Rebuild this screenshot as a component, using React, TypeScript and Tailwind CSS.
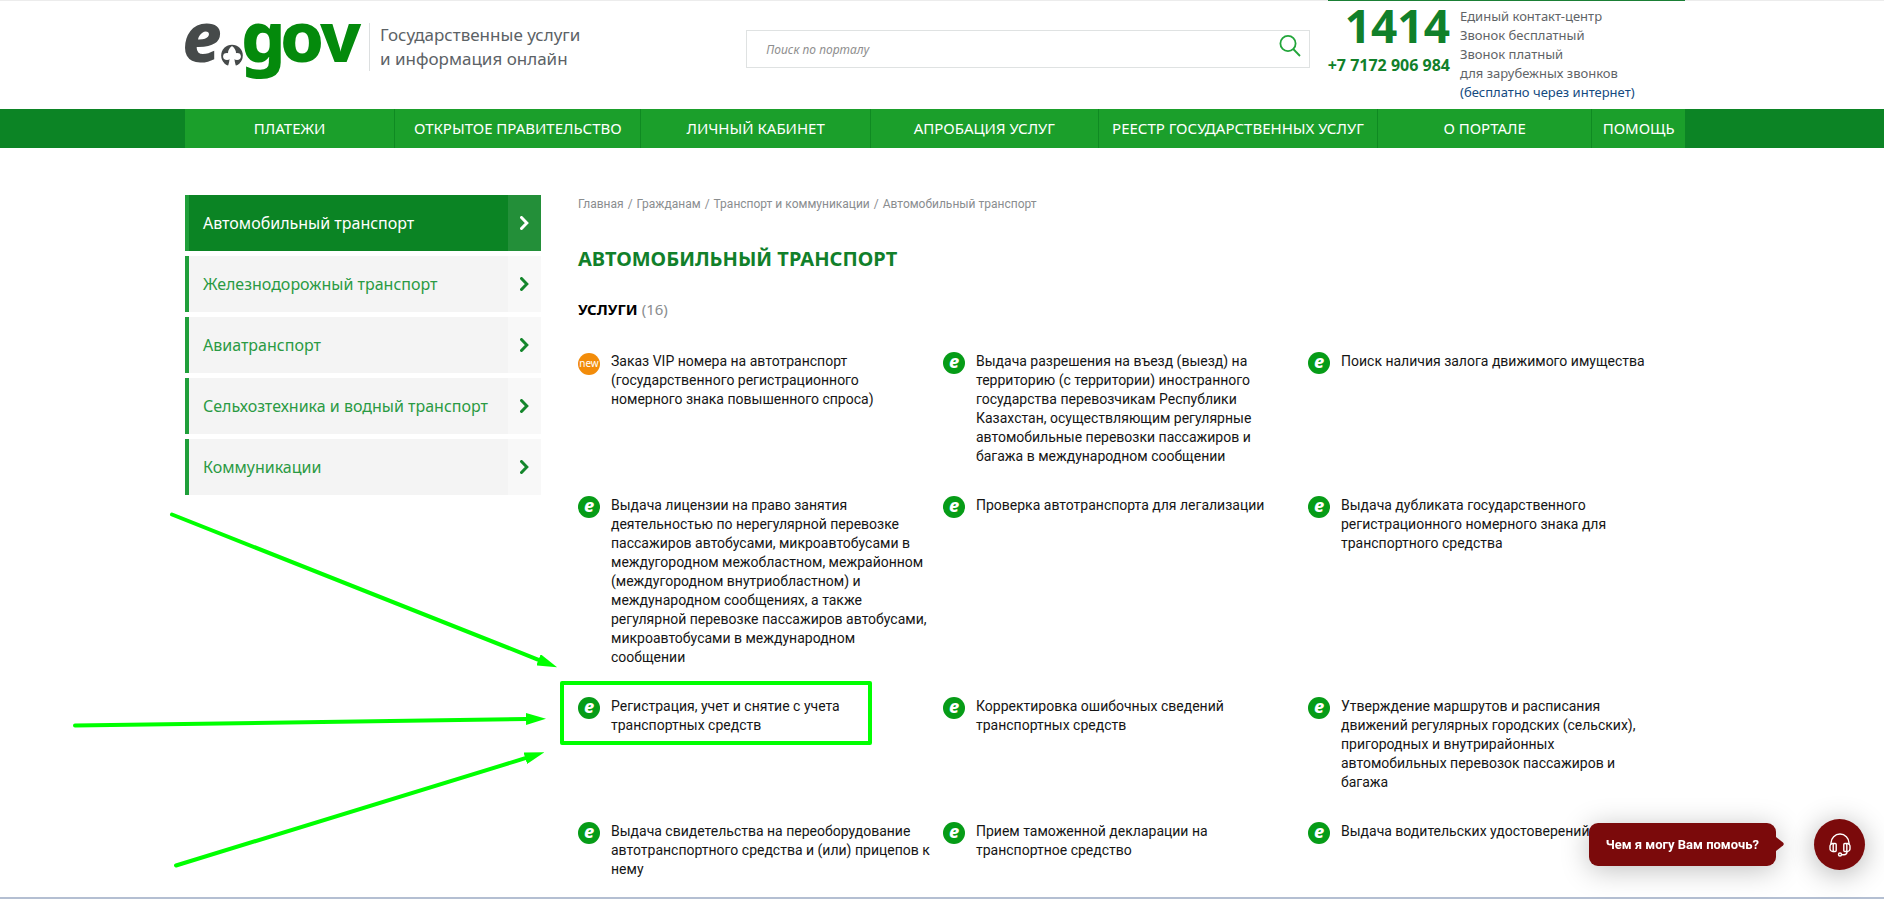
import React from "react";

const navItems = [
  { label: "ПЛАТЕЖИ", grow: "grow-[210]" },
  { label: "ОТКРЫТОЕ ПРАВИТЕЛЬСТВО", grow: "grow-[246]" },
  { label: "ЛИЧНЫЙ КАБИНЕТ", grow: "grow-[229]" },
  { label: "АПРОБАЦИЯ УСЛУГ", grow: "grow-[228]" },
  { label: "РЕЕСТР ГОСУДАРСТВЕННЫХ УСЛУГ", grow: "grow-[279]" },
  { label: "О ПОРТАЛЕ", grow: "grow-[214]" },
  { label: "ПОМОЩЬ", grow: "grow-[93]" },
];

const sections = [
  "Автомобильный транспорт",
  "Железнодорожный транспорт",
  "Авиатранспорт",
  "Сельхозтехника и водный транспорт",
  "Коммуникации",
];

const crumbs = ["Главная", "Гражданам", "Транспорт и коммуникации", "Автомобильный транспорт"];

type Service = { text: string; isNew?: boolean; marked?: boolean };

const services: Service[] = [
  {
    text: "Заказ VIP номера на автотранспорт\n(государственного регистрационного\nномерного знака повышенного спроса)",
    isNew: true,
  },
  {
    text: "Выдача разрешения на въезд (выезд) на\nтерриторию (с территории) иностранного\nгосударства перевозчикам Республики\nКазахстан, осуществляющим регулярные\nавтомобильные перевозки пассажиров и\nбагажа в международном сообщении",
  },
  { text: "Поиск наличия залога движимого имущества" },
  {
    text: "Выдача лицензии на право занятия\nдеятельностью по нерегулярной перевозке\nпассажиров автобусами, микроавтобусами в\nмеждугородном межобластном, межрайонном\n(междугородном внутриобластном) и\nмеждународном сообщениях, а также\nрегулярной перевозке пассажиров автобусами,\nмикроавтобусами в международном\nсообщении",
  },
  { text: "Проверка автотранспорта для легализации" },
  {
    text: "Выдача дубликата государственного\nрегистрационного номерного знака для\nтранспортного средства",
  },
  { text: "Регистрация, учет и снятие с учета\nтранспортных средств", marked: true },
  { text: "Корректировка ошибочных сведений\nтранспортных средств" },
  {
    text: "Утверждение маршрутов и расписания\nдвижений регулярных городских (сельских),\nпригородных и внутрирайонных\nавтомобильных перевозок пассажиров и\nбагажа",
  },
  {
    text: "Выдача свидетельства на переоборудование\nавтотранспортного средства и (или) прицепов к\nнему",
  },
  { text: "Прием таможенной декларации на\nтранспортное средство" },
  { text: "Выдача водительских удостоверений" },
];

function Logo() {
  return (
    <svg width="176" height="64" viewBox="0 0 176 64" className="block shrink-0 overflow-visible" role="img" aria-label="e.gov">
      <g fontFamily="'Noto Sans', sans-serif" fontWeight="800" fontSize="70">
        <text x="-3" y="45" fontStyle="italic" fill="#464a4a">e</text>
        <g fill="#048a0c">
          <text x="56" y="45">g</text>
          <text x="95" y="45">o</text>
          <text x="135" y="45">v</text>
        </g>
      </g>
      <circle cx="47" cy="38.500" r="10.800" fill="#464a4a" />
      <g fill="#fff">
        <path d="M47 29 C49.500 31 51 33 51 36 L51 40 L43 40 L43 36 C43 33 44.500 31 47 29 Z" />
        <ellipse cx="42" cy="39.500" rx="3.900" ry="3.400" />
        <ellipse cx="52" cy="39.500" rx="3.900" ry="3.400" />
        <path d="M44.500 39 H49.500 C49.200 43 50 46.500 51.500 50.500 H42.500 C44 46.500 44.800 43 44.500 39 Z" />
      </g>
    </svg>
  );
}

function Chevron() {
  return (
    <svg width="9" height="14" viewBox="0 0 9 14" fill="none" stroke="currentColor" strokeWidth="3" aria-hidden="true">
      <path d="M1.500 1.500 L6.800 7 L1.500 12.500" strokeLinecap="round" strokeLinejoin="miter" />
    </svg>
  );
}

function ServiceIcon({ isNew }: { isNew?: boolean }) {
  return isNew ? (
    <svg width="22" height="22" viewBox="0 0 22 22" className="mt-px shrink-0" aria-hidden="true">
      <circle cx="11" cy="11" r="11" fill="#f28c0a" />
      <text x="11" y="14" textAnchor="middle" fontFamily="'Noto Sans', sans-serif" fontSize="10" fill="#fff">new</text>
    </svg>
  ) : (
    <svg width="22" height="22" viewBox="0 0 22 22" className="shrink-0" aria-hidden="true">
      <circle cx="11" cy="11" r="11" fill="#069c17" />
      <text x="11" y="16" textAnchor="middle" fontFamily="'Noto Sans', sans-serif" fontWeight="800" fontStyle="italic" fontSize="18" fill="#fff">e</text>
    </svg>
  );
}

function Arrows() {
  return (
    <svg
      width="500"
      height="360"
      viewBox="73 510 500 360"
      className="pointer-events-none absolute top-[362px] -left-28"
      stroke="#00ff00"
      strokeWidth="4"
      strokeLinecap="round"
      aria-hidden="true"
    >
      <defs>
        <marker id="head" markerUnits="userSpaceOnUse" markerWidth="20" markerHeight="12" refX="0" refY="6" orient="auto">
          <path d="M0 0 L20 6 L0 12 Z" fill="#00ff00" stroke="none" />
        </marker>
      </defs>
      <path d="M172 514.500 L538.500 659.800" markerEnd="url(#head)" />
      <path d="M75 725.500 L526 719" markerEnd="url(#head)" />
      <path d="M176 865.500 L525.300 758.200" markerEnd="url(#head)" />
    </svg>
  );
}

function Header() {
  return (
    <header>
      <div className="border-t border-[#ececec] px-4">
        <div className="mx-auto flex h-[108px] max-w-[1500px] items-start">
          <a href="#home" className="flex pt-[16px]">
            <Logo />
            <span className="ml-2 mt-1.5 flex h-12 items-center border-l border-[#dcdfe0] pl-2.5 text-[17px] leading-6 text-[#5c6266]">
              <span className="whitespace-nowrap">
                Государственные услуги
                <br />
                и информация онлайн
              </span>
            </span>
          </a>
          <form className="mt-[29px] mr-[18px] ml-[166px] flex h-[38px] min-w-0 grow items-start border border-[#dfe2e2]" onSubmit={(e) => e.preventDefault()}>
            <label htmlFor="search" className="sr-only">Поиск по порталу</label>
            <input
              id="search"
              type="search"
              placeholder="Поиск по порталу"
              className="h-9 min-w-0 grow bg-transparent pl-[19px] text-[12px] italic outline-none placeholder:text-[#8e8e8e]"
            />
            <button type="submit" aria-label="Найти" className="mt-1 mr-2 text-[#22a53a]">
              <svg width="22" height="22" viewBox="0 0 22 22" fill="none" stroke="currentColor" strokeWidth="1.800">
                <circle cx="9" cy="8.500" r="7.600" />
                <path d="M14.200 14 L21 21" />
              </svg>
            </button>
          </form>
          <div className="-mt-px flex w-[357px] shrink-0 border-t border-[#1a7f35]">
            <div className="flex w-[122px] flex-col items-end font-bold whitespace-nowrap text-[#11802a]">
              <div className="text-[46px] leading-[48px]">1414</div>
              <div className="mt-1 text-[16px] leading-6">+7 7172 906 984</div>
            </div>
            <div className="ml-2.5 pt-[6px] text-[13px] leading-[19px] whitespace-nowrap text-[#5f6467]">
              <p>Единый контакт-центр</p>
              <p>Звонок бесплатный</p>
              <p>Звонок платный</p>
              <p>для зарубежных звонков</p>
              <a href="#call" className="text-[#134a80]">(бесплатно через интернет)</a>
            </div>
          </div>
        </div>
      </div>
      <nav className="bg-[#0c8425] px-4">
        <ul className="mx-auto flex h-[39px] max-w-[1500px] bg-[#1b9f2b]">
          {navItems.map((item) => (
            <li key={item.label} className={`flex basis-0 border-r border-[#0f8a22] last:border-r-0 ${item.grow}`}>
              <a href="#nav" className="flex grow items-center justify-center text-[15px] whitespace-nowrap text-white">
                {item.label}
              </a>
            </li>
          ))}
        </ul>
      </nav>
    </header>
  );
}

function Sidebar() {
  return (
    <aside className="w-[356px] shrink-0">
      <ul className="flex flex-col gap-[5px]">
        {sections.map((name, i) => (
          <li key={name}>
            <a
              href="#section"
              className={`flex h-14 border-l-4 border-[#1f9f3a] text-[16px] ${i === 0 ? "bg-[#0b8424] text-white" : "bg-[#f4f4f4] text-[#2a9a43]"}`}
            >
              <span className="flex grow items-center pl-3.5 whitespace-nowrap">{name}</span>
              <span className={`flex w-[33px] items-center justify-center ${i === 0 ? "bg-[#238f39]" : "bg-[#f8f8f8] text-[#14862c]"}`}>
                <Chevron />
              </span>
            </a>
          </li>
        ))}
      </ul>
    </aside>
  );
}

function ChatWidget() {
  return (
    <div className="fixed right-[19px] bottom-[29px] flex items-center gap-[38px] font-[Roboto,sans-serif]">
      <div className="relative rounded-[9px] bg-[#7b0a0b] px-[17px] py-[11px] text-[13px] leading-[21px] font-bold whitespace-nowrap text-white shadow-[0_4px_28px_rgba(0,0,0,0.25)]">
        Чем я могу Вам помочь?
        <svg width="8" height="14" viewBox="0 0 8 14" className="absolute top-3.5 left-full" fill="#7b0a0b" aria-hidden="true">
          <path d="M0 0 L7 5.500 Q8.500 7 7 8.500 L0 14 Z" />
        </svg>
      </div>
      <button type="button" aria-label="Открыть чат" className="flex size-[51px] items-center justify-center rounded-full bg-[#7b0a0b] text-white shadow-[0_4px_28px_rgba(0,0,0,0.3)]">
        <svg width="22" height="24" viewBox="0 0 22 24" fill="none" stroke="currentColor" strokeWidth="1.400">
          <path d="M2 11.500 V10 A9 9 0 0 1 20 10 V11.500" />
          <path d="M4.800 10.500 H3.800 A2.800 2.800 0 0 0 1 13.500 V15.500 A2.800 2.800 0 0 0 3.800 18.500 H4.800" />
          <path d="M17.200 10.500 H18.200 A2.800 2.800 0 0 1 21 13.500 V15.500 A2.800 2.800 0 0 1 18.200 18.500 H17.200" />
          <rect x="4.200" y="10.500" width="3" height="8" rx="1" />
          <rect x="14.800" y="10.500" width="3" height="8" rx="1" />
          <path d="M18 18.500 V19 A3 3 0 0 1 15 21.800 H12.500" />
          <circle cx="11" cy="21.500" r="1.500" />
        </svg>
      </button>
    </div>
  );
}

export default function App() {
  return (
    <div className="flex min-h-screen flex-col border-b-2 border-[#b4bfd2] bg-white pr-[14px] font-['Noto_Sans',sans-serif] [&>header]:-mr-[14px] [&>header>*]:pr-[30px]">
      <Header />
      <div className="px-4">
        <div className="relative mx-auto flex max-w-[1500px] gap-[37px] pt-[47px]">
          <Sidebar />
          <main className="min-w-0 grow">
            <ol className="flex gap-1 font-[Roboto,sans-serif] text-[12px] leading-[18px] text-[#8a8d8f]">
              {crumbs.map((crumb, i) => (
                <li key={crumb} className="flex gap-1">
                  {i > 0 && <span>/</span>}
                  <a href="#crumb">{crumb}</a>
                </li>
              ))}
            </ol>
            <h1 className="mt-[30px] text-[20px] leading-8 font-bold text-[#11802a]">АВТОМОБИЛЬНЫЙ ТРАНСПОРТ</h1>
            <h2 className="mt-[22px] text-[15px] leading-6 font-bold text-black">
              УСЛУГИ <span className="font-normal text-[#8a8d8f]">(16)</span>
            </h2>
            <ul className="mt-[31px] grid grid-cols-[365px_365px_1fr] gap-y-[30px]">
              {services.map((service) => (
                <li key={service.text} className="relative">
                  {service.marked && (
                    <span className="pointer-events-none absolute -top-4 -left-[18px] h-[64px] w-[312px] rounded-[2px] border-4 border-[#00ff00]" />
                  )}
                  <a href="#service" className="flex items-start gap-[11px] font-[Roboto,sans-serif] text-[14px] leading-[19px] whitespace-pre text-[#151515]">
                    <ServiceIcon isNew={service.isNew} />
                    <span>{service.text}</span>
                  </a>
                </li>
              ))}
            </ul>
          </main>
          <Arrows />
        </div>
      </div>
      <ChatWidget />
    </div>
  );
}
